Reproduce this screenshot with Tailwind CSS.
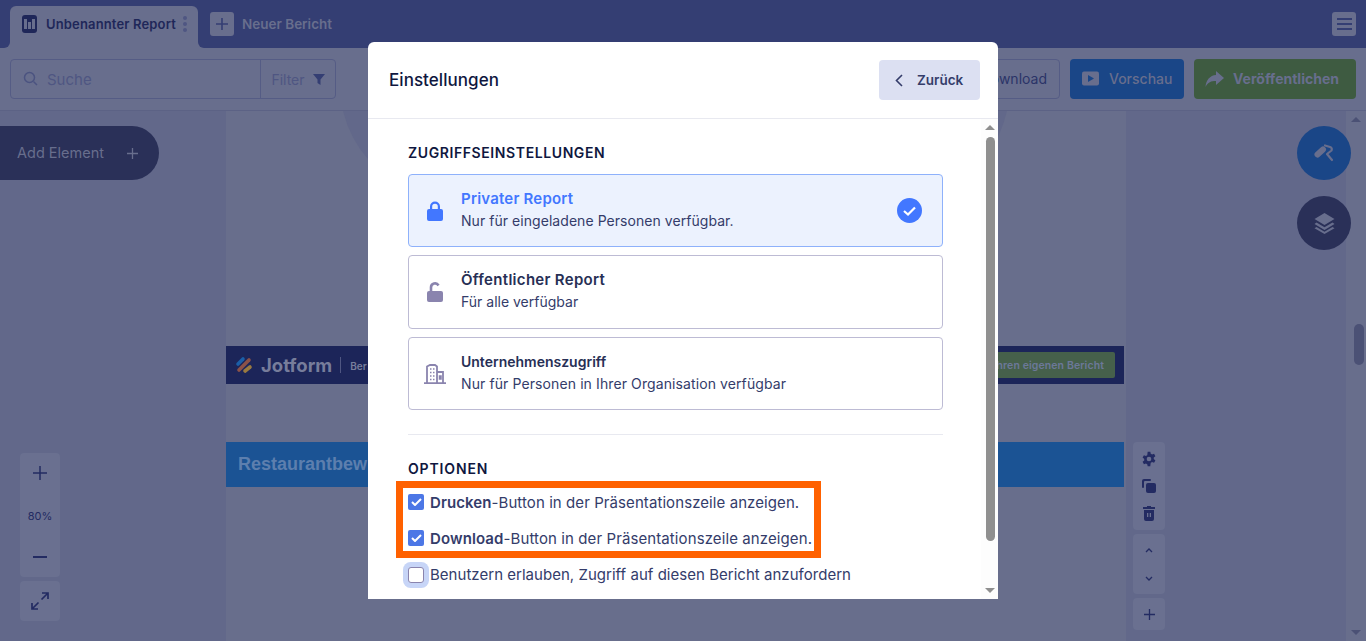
<!DOCTYPE html>
<html lang="de">
<head>
  <meta charset="UTF-8" />
  <title>Report Builder</title>
  <script src="https://cdn.jsdelivr.net/npm/@tailwindcss/browser@4"></script>
</head>
<body class="font-['Inter',sans-serif] overflow-hidden">
<div class="relative h-[641px] w-[1366px] overflow-hidden bg-[#62688a]">

  <!-- top bar -->
  <header class="flex h-[48px] items-end justify-between bg-[#343e73] pl-[10px] pr-[10px]">
    <div class="flex items-end">
      <div class="relative flex h-[42px] w-[188px] items-center rounded-t-[6px] bg-[#686e8d] pb-[6px] pl-[12px]">
        <span class="absolute -left-[6px] bottom-0 size-[6px] bg-[#686e8d]"><span class="block size-full rounded-br-[6px] bg-[#343e73]"></span></span>
        <span class="absolute -right-[6px] bottom-0 size-[6px] bg-[#686e8d]"><span class="block size-full rounded-bl-[6px] bg-[#343e73]"></span></span>
        <span class="flex h-[18px] w-[15px] justify-center gap-[1px] rounded-[3px] bg-[#1f2759] pt-[4px]">
          <span class="h-[10px] w-[3px] bg-[#686e8d]"></span><span class="mt-[3px] h-[7px] w-[3px] bg-[#686e8d]"></span><span class="h-[10px] w-[3px] bg-[#686e8d]"></span>
        </span>
        <span class="ml-[9px] whitespace-nowrap pt-[2px] text-[13px] font-semibold tracking-[0.15px] text-[#1f2759]">Unbenannter Report</span>
        <span class="ml-[7px] flex flex-col gap-[2px]">
          <span class="size-[4px] rounded-full bg-[#4f5682]"></span><span class="size-[4px] rounded-full bg-[#4f5682]"></span><span class="size-[4px] rounded-full bg-[#4f5682]"></span>
        </span>
      </div>
      <div class="mb-[12px] ml-[12px] flex items-center">
        <span class="flex size-[24px] items-center justify-center rounded-[3px] bg-[#686e8d]">
          <svg class="size-[14px]" viewBox="0 0 14 14" fill="none" stroke="#343e73" stroke-width="1.6"><path d="M7 1v12M1 7h12"/></svg>
        </span>
        <span class="ml-[8px] text-[13.5px] font-semibold text-[#686e8d]">Neuer Bericht</span>
      </div>
    </div>
    <span class="mb-[12px] flex size-[24px] flex-col items-center justify-center gap-[3px] rounded-[3px] bg-[#686e8d]">
      <span class="h-[2px] w-[15px] bg-[#343e73]"></span><span class="h-[2px] w-[15px] bg-[#343e73]"></span><span class="h-[2px] w-[15px] bg-[#343e73]"></span>
    </span>
  </header>

  <!-- toolbar -->
  <div class="flex h-[63px] items-center justify-between border-b border-[#5c6285] bg-[#686e8d] px-[10px] pb-[1px]">
    <div class="flex h-[40px] w-[326px] rounded-[4px] border border-[#555c85]">
      <div class="flex flex-1 items-center border-r border-[#555c85] pl-[12px]">
        <svg class="size-[15px]" viewBox="0 0 15 15" fill="none" stroke="#4b5380" stroke-width="1.5"><circle cx="6.5" cy="6.5" r="5"/><path d="M10.5 10.5 14 14"/></svg>
        <span class="ml-[9px] pt-[3px] text-[15px] text-[#4f5682]">Suche</span>
      </div>
      <div class="flex w-[74px] items-center justify-center gap-[8px] pt-px text-[14px] text-[#4f5682]">
        Filter
        <svg class="size-[12px]" viewBox="0 0 12 12" fill="#343e73"><path d="M0 1h12L7.500 6.500V12l-3-2V6.500z"/></svg>
      </div>
    </div>
    <div class="flex items-center gap-[10px]">
      <div class="flex h-[40px] items-center rounded-[4px] border border-[#555c85] pl-[20px] pr-[12px] text-[14px] text-[#2b3468]">Download</div>
      <div class="flex h-[40px] w-[114px] items-center rounded-[4px] bg-[#1a4687] pl-[12px] text-[14px] font-medium text-[#686e8d]">
        <svg class="size-[17px]" viewBox="0 0 17 17"><rect y="1.500" width="17" height="14" rx="2" fill="#686e8d"/><path d="M6 5l6 3.500-6 3.500z" fill="#1a4687"/></svg>
        <span class="ml-[10px]">Vorschau</span>
      </div>
      <div class="flex h-[40px] w-[162px] items-center rounded-[4px] bg-[#3e5b41] pl-[11px] text-[14px] font-bold text-[#686e8d]">
        <svg class="h-[16px] w-[19px]" viewBox="0 0 19 16" fill="#686e8d"><path d="M11 0l8 7-8 7v-4C6 10 3 11 0.500 16 1 9 5 4.500 11 4z"/></svg>
        <span class="ml-[9px]">Veröffentlichen</span>
      </div>
    </div>
  </div>

  <!-- canvas -->
  <main class="relative flex h-[530px] justify-center pr-[14px]">
    <div class="relative h-full w-[900px] bg-[#686e8c] pt-[235px]">
      <svg class="absolute left-0 top-0 h-[48px] w-[900px]" viewBox="0 0 900 48" fill="#62688a"><path d="M117 0Q124 28 142 48H760Q775 25 781 0z"/></svg>
      <div class="relative flex h-[38px] w-[898px] items-center justify-between bg-[#1c2559] pl-[9px] pr-[9px]">
        <div class="flex items-center">
          <svg class="size-[18px]" viewBox="0 0 18 18" fill="none" stroke-width="3.600" stroke-linecap="round"><path d="M3 8 8 3" stroke="#1b5fa8"/><path d="M4 14 14 4" stroke="#8c5248"/><path d="M10 15l5-4" stroke="#9a7a40"/></svg>
          <span class="ml-[8px] pt-[1px] text-[18.5px] font-bold text-[#777d9b]">Jotform</span>
          <span class="ml-[8px] h-[16px] w-px bg-[#4f5682]"></span>
          <span class="ml-[9px] pt-[2px] text-[10px] font-semibold text-[#777d9b]">Ber</span>
        </div>
        <div class="flex h-[26px] items-center rounded-[2px] bg-[#46604b] pl-[58px] pr-[11px] pt-[2px] text-[10.5px] font-semibold tracking-[0.1px] text-[#6c7899]">Ihren eigenen Bericht</div>
      </div>
      <div class="mt-[58px] flex h-[45px] w-[898px] items-center bg-[#1b5394] pl-[12px] font-['Liberation_Sans',sans-serif] text-[18px] font-bold text-[#5d7fae]">Restaurantbew</div>
    </div>

    <!-- page scrollbar -->
    <div class="absolute right-0 top-0 flex h-full w-[20px] flex-col items-center justify-between bg-[#686e8c] py-[6px]">
      <span class="border-x-[5px] border-b-[5px] border-x-transparent border-b-[#4b5175]"></span>
      <span class="border-x-[5px] border-t-[5px] border-x-transparent border-t-[#4b5175]"></span>
    </div>
    <span class="absolute right-[2px] top-[213px] h-[41px] w-[10px] rounded-[5px] bg-[#4b5175]"></span>

    <!-- floating controls on the canvas -->
    <div class="absolute left-0 top-[15px] flex h-[54px] w-[159px] items-center rounded-r-[27px] bg-[#2a3058] pl-[17px] text-[14.5px] text-[#686e8d]">
      Add Element
      <svg class="ml-[23px] size-[11px]" viewBox="0 0 11 11" stroke="#686e8d" stroke-width="1.300"><path d="M5.500 0v11M0 5.500h11"/></svg>
    </div>

    <div class="absolute left-[20px] top-[342px] flex w-[40px] flex-col gap-[4px] text-[#232b62]">
      <div class="flex h-[124px] flex-col items-center justify-between rounded-[4px] bg-[#6a7090] pb-[12px] pt-[13px]">
        <svg class="size-[14px]" viewBox="0 0 14 14" stroke="#232b62" stroke-width="1.500"><path d="M7 0v14M0 7h14"/></svg>
        <span class="mb-[4px] text-[11px]">80%</span>
        <svg class="mb-[7px] h-[2px] w-[14px]" viewBox="0 0 14 2" stroke="#232b62" stroke-width="2"><path d="M0 1h14"/></svg>
      </div>
      <div class="flex h-[40px] items-center justify-center rounded-[4px] bg-[#6a7090]">
        <svg class="size-[18px]" viewBox="0 0 18 18" fill="none" stroke="#232b62" stroke-width="1.700"><path d="M11 1h6v6M17 1l-6.500 6.500M7 17H1v-6M1 17l6.500-6.500"/></svg>
      </div>
    </div>

    <div class="absolute left-[1133px] top-[331px] flex w-[32px] flex-col gap-[4px]">
      <div class="flex h-[88px] flex-col items-center justify-around rounded-[4px] bg-[#6a7090] py-[4px]">
        <svg class="size-[16px]" viewBox="0 0 24 24" fill="#232b62"><path fill-rule="evenodd" d="M14 1l.6 3.200a8 8 0 0 1 1.900 1.100l3.100-1.100 2 3.500-2.500 2.100a8 8 0 0 1 0 2.200l2.500 2.100-2 3.500-3.100-1.100a8 8 0 0 1-1.900 1.100L14 21.800V23h-4l-.6-3.200a8 8 0 0 1-1.900-1.100l-3.100 1.100-2-3.500 2.500-2.100a8 8 0 0 1 0-2.200L2.400 9.900l2-3.500 3.100 1.100a8 8 0 0 1 1.900-1.100L10 1zM12 8.500a3.500 3.500 0 1 0 0 7 3.500 3.500 0 0 0 0-7z"/></svg>
        <svg class="size-[16px]" viewBox="0 0 16 16" fill="#232b62"><path d="M1 3a2 2 0 0 1 2-2h6a1 1 0 0 1 0 2H4a1 1 0 0 0-1 1v5a1 1 0 0 1-2 0z"/><rect x="5" y="5" width="10" height="10" rx="2"/></svg>
        <svg class="size-[16px]" viewBox="0 0 16 16" fill="#232b62"><path d="M2 2h4V1h4v1h4v2H2zM3 5h10v9a2 2 0 0 1-2 2H5a2 2 0 0 1-2-2zm3 3v4h1.300V8zm2.700 0v4H10V8z"/></svg>
      </div>
      <div class="flex h-[60px] flex-col items-center justify-around rounded-[4px] bg-[#6a7090] py-[2px]">
        <svg class="h-[5px] w-[8px]" viewBox="0 0 8 5" fill="none" stroke="#232b62" stroke-width="1.300"><path d="M1 4l3-3 3 3"/></svg>
        <svg class="h-[5px] w-[8px]" viewBox="0 0 8 5" fill="none" stroke="#232b62" stroke-width="1.300"><path d="M1 1l3 3 3-3"/></svg>
      </div>
      <div class="flex h-[32px] items-center justify-center rounded-[4px] bg-[#6a7090]">
        <svg class="size-[11px]" viewBox="0 0 11 11" stroke="#232b62" stroke-width="1.300"><path d="M5.500 0v11M0 5.500h11"/></svg>
      </div>
    </div>

    <div class="absolute left-[1297px] top-[15px] flex flex-col gap-[16px]">
      <div class="flex size-[54px] items-center justify-center rounded-full bg-[#1a4687]">
        <svg class="h-[18px] w-[20px]" viewBox="0 0 20 18" fill="none" stroke="#686e8d"><path d="M3.500 10.500 9 5.500" stroke-width="6" stroke-linecap="round"/><path d="M11 1.500l5 1.500q2.500 1 1.500 3.500L13 10l5 6" stroke-width="2.200" stroke-linecap="round" stroke-linejoin="round"/></svg>
      </div>
      <div class="flex size-[54px] items-center justify-center rounded-full bg-[#2a3058]">
        <svg class="size-[21px]" viewBox="0 0 21 21" fill="#686e8d"><path d="M10.500 0l10 6-10 6-10-6z"/><path d="M2.500 9.500l8 4.800 8-4.800 2 1.500-10 6-10-6z"/><path d="M2.500 14l8 4.800 8-4.800 2 1.200-10 5.800-10-5.800z"/></svg>
      </div>
    </div>
  </main>

  <!-- settings modal -->
  <div class="absolute left-[368px] top-[42px] flex h-[557px] w-[630px] flex-col rounded-t-[6px] bg-white">
    <div class="flex h-[77px] shrink-0 items-center justify-between border-b border-[#e8e9f0] pl-[21px] pr-[18px]">
      <h2 class="pt-[2px] text-[17px] font-medium tracking-[0.05px] text-[#0f1740]">Einstellungen</h2>
      <button class="flex h-[40px] w-[101px] items-center rounded-[4px] bg-[#dce0f2] pl-[16px] text-[13.500px] font-semibold text-[#343c6a]">
        <svg class="h-[13px] w-[8px]" viewBox="0 0 8 13" fill="none" stroke="#343c6a" stroke-width="1.600"><path d="M7 1 1.500 6.500 7 12"/></svg>
        <span class="ml-[14px]">Zurück</span>
      </button>
    </div>

    <div class="relative flex-1 overflow-hidden pl-[40px] pr-[55px] pt-[25px]">
      <h3 class="text-[14px] font-semibold leading-[18px] tracking-[0.6px] text-[#0f1740]">ZUGRIFFSEINSTELLUNGEN</h3>
      <div class="mt-[12px] flex flex-col gap-[8px]">
        <div class="flex h-[73px] items-center rounded-[4px] border border-[#8eb1fb] bg-[#ecf2fe] pl-[18px] pr-[20px]">
          <svg class="h-[20px] w-[16px] shrink-0" viewBox="0 0 16 20" fill="#4277ff"><path d="M3 8V5.500a5 5 0 0 1 10 0V8h1a2 2 0 0 1 2 2v8a2 2 0 0 1-2 2H2a2 2 0 0 1-2-2v-8a2 2 0 0 1 2-2zm2.200 0h5.600V5.500a2.800 2.800 0 0 0-5.600 0z"/></svg>
          <div class="ml-[18px] flex-1 pb-[2px]">
            <div class="text-[15px] font-semibold leading-[22px] tracking-[0.2px] text-[#4277ff]">Privater Report</div>
            <div class="text-[14px] leading-[22px] tracking-[0.05px] text-[#343c6a]">Nur für eingeladene Personen verfügbar.</div>
          </div>
          <span class="flex size-[25px] items-center justify-center rounded-full bg-[#4277ff]">
            <svg class="h-[10px] w-[13px]" viewBox="0 0 13 10" fill="none" stroke="#fff" stroke-width="2.200"><path d="M1 5l4 3.500L12 1.500"/></svg>
          </span>
        </div>
        <div class="flex h-[74px] items-center rounded-[4px] border border-[#bdbbd4] pl-[18px]">
          <svg class="h-[20px] w-[16px] shrink-0" viewBox="0 0 16 20"><rect y="9" width="16" height="11" rx="2" fill="#8a84ae"/><path d="M4 10V5.500a4 4 0 0 1 7.500-2" fill="none" stroke="#8a84ae" stroke-width="2.600"/></svg>
          <div class="ml-[18px] pb-[2px]">
            <div class="text-[15px] font-semibold leading-[22px] tracking-[0.3px] text-[#272f55]">Öffentlicher Report</div>
            <div class="text-[14px] leading-[22px] text-[#343c6a]">Für alle verfügbar</div>
          </div>
        </div>
        <div class="flex h-[73px] items-center rounded-[4px] border border-[#bdbbd4] pl-[15px]">
          <svg class="h-[20px] w-[22px] shrink-0" viewBox="0 0 22 20" fill="none" stroke="#8a84ae" stroke-width="1.800"><path d="M0 19.100h22M3 19V2.500L6 1h5l2 1.500V19M13 8h6v11"/><path d="M6 5h1.500M9 5h1.500M6 8.500h1.500M9 8.500h1.500M6 12h1.500M9 12h1.500M6 15.500h1.500M9 15.500h1.500M15.500 12h1.500v3h-1.500z" stroke-width="1.500"/></svg>
          <div class="ml-[15px] pb-[2px]">
            <div class="text-[14px] font-semibold leading-[22px] text-[#272f55]">Unternehmenszugriff</div>
            <div class="text-[14px] leading-[22px] tracking-[0.1px] text-[#343c6a]">Nur für Personen in Ihrer Organisation verfügbar</div>
          </div>
        </div>
      </div>
      <hr class="mt-[24px] border-[#e8e9f0]" />
      <h3 class="mt-[25px] text-[14px] font-semibold leading-[18px] tracking-[0.85px] text-[#0f1740]">OPTIONEN</h3>

      <div class="-ml-[12px] mt-[3px] flex h-[77px] w-[425px] flex-col justify-center gap-[20px] border-[7px] border-[#ff6100] pl-[5px]">
        <label class="flex h-[16px] items-center gap-[6px] whitespace-nowrap text-[15px] tracking-[0.08px] text-[#343c6a]">
          <span class="flex size-[16px] shrink-0 items-center justify-center rounded-[2px] bg-[#4c77e6]">
            <svg class="h-[8px] w-[11px]" viewBox="0 0 11 8" fill="none" stroke="#fff" stroke-width="2"><path d="M1 4l3 3 6-6"/></svg>
          </span>
          <span class="pt-[3px]"><b class="font-semibold">Drucken</b>-Button in der Präsentationszeile anzeigen.</span>
        </label>
        <label class="flex h-[16px] items-center gap-[6px] whitespace-nowrap text-[15px] tracking-[0.1px] text-[#343c6a]">
          <span class="flex size-[16px] shrink-0 items-center justify-center rounded-[2px] bg-[#4c77e6]">
            <svg class="h-[8px] w-[11px]" viewBox="0 0 11 8" fill="none" stroke="#fff" stroke-width="2"><path d="M1 4l3 3 6-6"/></svg>
          </span>
          <span class="pt-[3px]"><b class="font-semibold">Download</b>-Button in der Präsentationszeile anzeigen.</span>
        </label>
      </div>
      <label class="mt-[9px] flex h-[16px] items-center gap-[6px] whitespace-nowrap text-[15px] tracking-[0.03px] text-[#343c6a]">
        <span class="size-[16px] shrink-0 rounded-[3px] border border-[#8a84ae] bg-white ring-[5px] ring-[#c7d5f7]"></span>
        <span>Benutzern erlauben, Zugriff auf diesen Bericht anzufordern</span>
      </label>

      <!-- modal scrollbar -->
      <div class="absolute bottom-0 right-0 top-0 flex w-[17px] flex-col items-center justify-between bg-[#fdfdfd] py-[6px]">
        <span class="border-x-[5px] border-b-[5px] border-x-transparent border-b-[#8f8f8f]"></span>
        <span class="border-x-[5px] border-t-[5px] border-x-transparent border-t-[#8f8f8f]"></span>
      </div>
      <span class="absolute right-[3px] top-[18px] h-[404px] w-[9px] rounded-[5px] bg-[#8f8f8f]"></span>
    </div>
  </div>
</div>
</body>
</html>
